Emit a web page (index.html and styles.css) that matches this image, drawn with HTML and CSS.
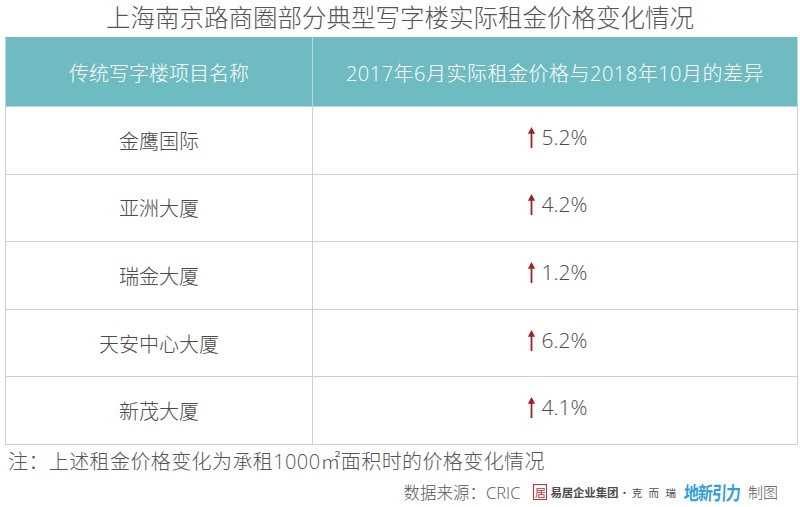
FILE: index.html
```html
<!DOCTYPE html>
<html lang="zh-CN">
<head>
<meta charset="utf-8">
<title>上海南京路商圈部分典型写字楼实际租金价格变化情况</title>
<link rel="stylesheet" href="styles.css">
</head>
<body>
<div class="page">
  <h1 class="title">上海南京路商圈部分典型写字楼实际租金价格变化情况</h1>
  <table class="rent">
    <thead>
      <tr>
        <th class="col-name">传统写字楼项目名称</th>
        <th class="col-diff">2017年6月实际租金价格与2018年10月的差异</th>
      </tr>
    </thead>
    <tbody>
      <tr><td>金鹰国际</td><td><span class="val"><svg class="arrow" viewBox="0 0 8 20"><path d="M4 20V5" /><polygon points="0.6,6.5 4,0 7.4,6.5" /></svg>5.2%</span></td></tr>
      <tr><td>亚洲大厦</td><td><span class="val"><svg class="arrow" viewBox="0 0 8 20"><path d="M4 20V5" /><polygon points="0.6,6.5 4,0 7.4,6.5" /></svg>4.2%</span></td></tr>
      <tr><td>瑞金大厦</td><td><span class="val"><svg class="arrow" viewBox="0 0 8 20"><path d="M4 20V5" /><polygon points="0.6,6.5 4,0 7.4,6.5" /></svg>1.2%</span></td></tr>
      <tr><td>天安中心大厦</td><td><span class="val"><svg class="arrow" viewBox="0 0 8 20"><path d="M4 20V5" /><polygon points="0.6,6.5 4,0 7.4,6.5" /></svg>6.2%</span></td></tr>
      <tr><td>新茂大厦</td><td><span class="val"><svg class="arrow" viewBox="0 0 8 20"><path d="M4 20V5" /><polygon points="0.6,6.5 4,0 7.4,6.5" /></svg>4.1%</span></td></tr>
    </tbody>
  </table>
  <p class="note">注：上述租金价格变化为承租1000㎡面积时的价格变化情况</p>
  <div class="source">
    <span class="src-label">数据来源：CRIC</span>
    <span class="logo-eju"><span class="seal">居</span><span class="eju-name">易居企业集团<span class="kr">·克 而 瑞</span></span></span>
    <span class="logo-dx">地新引力</span>
    <span class="src-made">制图</span>
  </div>
</div>
</body>
</html>
```
FILE: styles.css
```css
html, body {
  margin: 0;
  padding: 0;
  background: #ffffff;
}

body {
  font-family: "Open Sans", "Noto Sans CJK SC", "Noto Sans", sans-serif;
  font-weight: 300;
  color: #4a4a4a;
}

.page {
  width: 800px;
  height: 507px;
  overflow: hidden;
}

.title {
  margin: 0;
  height: 37px;
  line-height: 36px;
  font-size: 24.5px;
  font-weight: 300;
  color: #555555;
  text-align: center;
}

.rent {
  margin-left: 5px;
  width: 793px;
  border-collapse: collapse;
  table-layout: fixed;
}

.rent th,
.rent td {
  border: 1px solid #cfcfcf;
  padding: 0;
  text-align: center;
  font-size: 20px;
  font-weight: 300;
}

.rent th {
  background: #6ebcc1;
  color: #ffffff;
  height: 68px;
  border-color: #b9d9db;
  border-top-color: #6ebcc1;
}

.col-name {
  width: 306px;
}

.col-diff {
  letter-spacing: 0.5px;
}

.rent td {
  height: 66.6px;
  color: #4a4a4a;
}

.val {
  display: inline-flex;
  align-items: flex-end;
  gap: 6px;
  margin-left: 4px;
  line-height: 20px;
  font-size: 21px;
}

.arrow {
  width: 9px;
  height: 21px;
  flex: none;
  margin-bottom: -1px;
}

.arrow path {
  stroke: #a41e22;
  stroke-width: 1.7;
  fill: none;
}

.arrow polygon {
  fill: #a41e22;
}

.note {
  margin: 0;
  padding-left: 8px;
  height: 33px;
  line-height: 33px;
  font-size: 20px;
  letter-spacing: 0.4px;
  color: #555555;
}

.source {
  display: flex;
  justify-content: flex-end;
  align-items: center;
  padding-right: 22px;
  height: 28px;
  color: #555555;
}

.src-label {
  font-size: 16.5px;
  margin-right: 13px;
}

.logo-eju {
  display: inline-flex;
  align-items: center;
  gap: 3px;
  margin-right: 6px;
}

.seal {
  display: inline-block;
  width: 12px;
  height: 14px;
  border: 1px solid #c5313a;
  color: #c5313a;
  font-family: "Noto Sans CJK SC", sans-serif;
  font-size: 11px;
  line-height: 14px;
  text-align: center;
  font-weight: 400;
}

.eju-name {
  font-family: "Noto Sans CJK SC", sans-serif;
  font-size: 11.5px;
  font-weight: 700;
  color: #4d4d4d;
  letter-spacing: -0.2px;
}

.kr {
  letter-spacing: 2px;
  font-weight: 400;
  font-size: 10.5px;
  margin-left: 1px;
}

.logo-dx {
  font-family: "Noto Sans CJK SC", sans-serif;
  font-weight: 700;
  font-size: 15px;
  color: #2f9fd8;
  letter-spacing: -1px;
  transform: scaleY(1.25) skewX(-4deg);
  margin-right: 8px;
}

.src-made {
  font-size: 15px;
}
```
